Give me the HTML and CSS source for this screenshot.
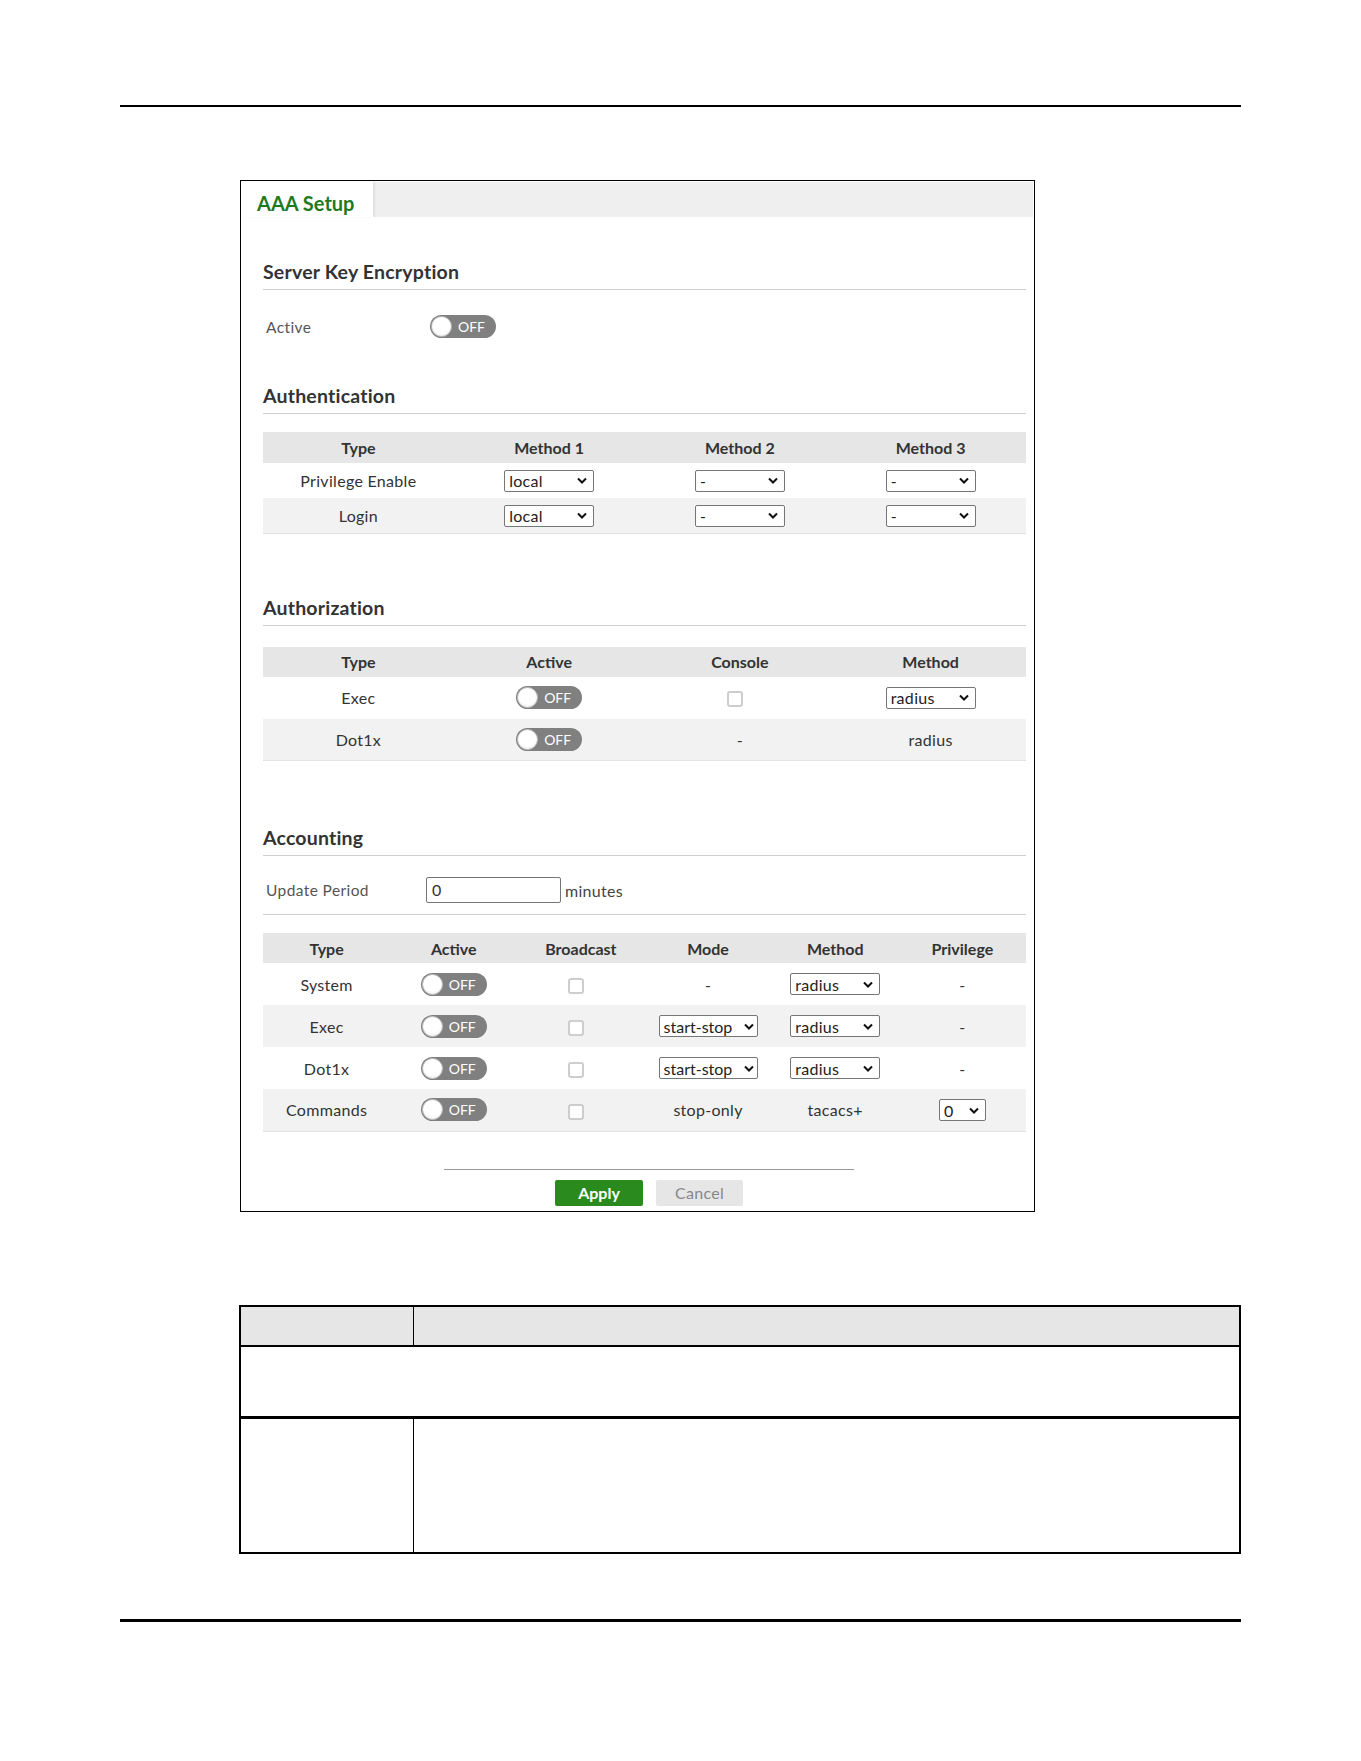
FILE: index.html
```html
<!DOCTYPE html>
<html lang="en">
<head>
  <meta charset="UTF-8">
  <title>AAA Setup</title>
  <link rel="stylesheet" href="styles.css">
</head>
<body>
  <div class="rule-top"></div>

  <div class="panel">
    <div class="tab-bar">
      <div class="tab">AAA Setup</div>
    </div>

    <div class="content">
      <h2 class="section-title first">Server Key Encryption</h2>
      <div class="field-row active-row">
        <span class="field-label">Active</span>
        <span class="toggle"><span class="knob"></span>OFF</span>
      </div>

      <h2 class="section-title auth-title">Authentication</h2>
      <table class="grid auth-grid">
        <thead>
          <tr><th>Type</th><th>Method 1</th><th>Method 2</th><th>Method 3</th></tr>
        </thead>
        <tbody>
          <tr>
            <td>Privilege Enable</td>
            <td><span class="select w90">local<svg viewBox="0 0 10 6"><path d="M1 1l4 4 4-4"/></svg></span></td>
            <td><span class="select w90">-<svg viewBox="0 0 10 6"><path d="M1 1l4 4 4-4"/></svg></span></td>
            <td><span class="select w90">-<svg viewBox="0 0 10 6"><path d="M1 1l4 4 4-4"/></svg></span></td>
          </tr>
          <tr>
            <td>Login</td>
            <td><span class="select w90">local<svg viewBox="0 0 10 6"><path d="M1 1l4 4 4-4"/></svg></span></td>
            <td><span class="select w90">-<svg viewBox="0 0 10 6"><path d="M1 1l4 4 4-4"/></svg></span></td>
            <td><span class="select w90">-<svg viewBox="0 0 10 6"><path d="M1 1l4 4 4-4"/></svg></span></td>
          </tr>
        </tbody>
      </table>

      <h2 class="section-title authz-title">Authorization</h2>
      <table class="grid tall-grid authz-grid">
        <thead>
          <tr><th>Type</th><th>Active</th><th>Console</th><th>Method</th></tr>
        </thead>
        <tbody>
          <tr>
            <td>Exec</td>
            <td><span class="toggle"><span class="knob"></span>OFF</span></td>
            <td><span class="check"></span></td>
            <td><span class="select w90">radius<svg viewBox="0 0 10 6"><path d="M1 1l4 4 4-4"/></svg></span></td>
          </tr>
          <tr>
            <td>Dot1x</td>
            <td><span class="toggle"><span class="knob"></span>OFF</span></td>
            <td>-</td>
            <td>radius</td>
          </tr>
        </tbody>
      </table>

      <h2 class="section-title acct-title">Accounting</h2>
      <div class="field-row period-row">
        <span class="field-label">Update Period</span>
        <span class="text-input">0</span>
        <span class="unit">minutes</span>
      </div>
      <div class="divider"></div>

      <table class="grid tall-grid acct-grid">
        <thead>
          <tr><th>Type</th><th>Active</th><th>Broadcast</th><th>Mode</th><th>Method</th><th>Privilege</th></tr>
        </thead>
        <tbody>
          <tr>
            <td>System</td>
            <td><span class="toggle"><span class="knob"></span>OFF</span></td>
            <td><span class="check"></span></td>
            <td>-</td>
            <td><span class="select w90">radius<svg viewBox="0 0 10 6"><path d="M1 1l4 4 4-4"/></svg></span></td>
            <td>-</td>
          </tr>
          <tr>
            <td>Exec</td>
            <td><span class="toggle"><span class="knob"></span>OFF</span></td>
            <td><span class="check"></span></td>
            <td><span class="select w99">start-stop<svg viewBox="0 0 10 6"><path d="M1 1l4 4 4-4"/></svg></span></td>
            <td><span class="select w90">radius<svg viewBox="0 0 10 6"><path d="M1 1l4 4 4-4"/></svg></span></td>
            <td>-</td>
          </tr>
          <tr>
            <td>Dot1x</td>
            <td><span class="toggle"><span class="knob"></span>OFF</span></td>
            <td><span class="check"></span></td>
            <td><span class="select w99">start-stop<svg viewBox="0 0 10 6"><path d="M1 1l4 4 4-4"/></svg></span></td>
            <td><span class="select w90">radius<svg viewBox="0 0 10 6"><path d="M1 1l4 4 4-4"/></svg></span></td>
            <td>-</td>
          </tr>
          <tr>
            <td>Commands</td>
            <td><span class="toggle"><span class="knob"></span>OFF</span></td>
            <td><span class="check"></span></td>
            <td>stop-only</td>
            <td>tacacs+</td>
            <td><span class="select w47">0<svg viewBox="0 0 10 6"><path d="M1 1l4 4 4-4"/></svg></span></td>
          </tr>
        </tbody>
      </table>

      <div class="footer">
        <button class="btn btn-apply">Apply</button>
        <button class="btn btn-cancel">Cancel</button>
      </div>
    </div>
  </div>

  <table class="doc-table">
    <tr class="doc-head"><td class="col-label"></td><td></td></tr>
    <tr class="doc-span"><td colspan="2"></td></tr>
    <tr class="doc-row"><td class="col-label"></td><td></td></tr>
  </table>

  <div class="rule-bottom"></div>
</body>
</html>
```

FILE: styles.css
```css
* {
  margin: 0;
  padding: 0;
  box-sizing: border-box;
}

body {
  background: #fff;
  font-family: Lato, 'DejaVu Sans', sans-serif;
  color: #333;
  width: 1361px;
}

.rule-top {
  margin: 105px 0 0 120px;
  width: 1121px;
  border-top: 2px solid #000;
}

.panel {
  margin: 73px 0 0 240px;
  width: 795px;
  border: 1px solid #000;
  padding: 1px;
}

.tab-bar {
  height: 35px;
  background: #efefef;
  display: flex;
}

.tab {
  width: 131px;
  background: #fff;
  color: #1f7a1f;
  font-weight: 700;
  font-size: 20px;
  line-height: 42px;
  padding-left: 15px;
  box-shadow: 2px 0 2px rgba(0, 0, 0, 0.06);
}

.content {
  padding: 0 7px 4px 21px;
}

.section-title {
  font-size: 19.5px;
  font-weight: 700;
  line-height: 24px;
  padding-bottom: 5px;
  border-bottom: 1px solid #cfcfcf;
  color: #333;
  letter-spacing: 0.2px;
}

.section-title.first { margin-top: 43px; }
.section-title.auth-title { margin-top: 46px; }
.section-title.authz-title { margin-top: 62px; }
.section-title.acct-title { margin-top: 65px; }

.field-row {
  display: flex;
  align-items: center;
}

.active-row {
  margin-top: 25px;
  height: 23px;
}

.period-row {
  margin-top: 21px;
  height: 26px;
}

.field-label {
  width: 163px;
  padding-left: 3px;
  font-size: 15.5px;
  letter-spacing: 0.4px;
  color: #555;
}

.active-row .field-label {
  width: 167px;
}

.text-input {
  width: 135px;
  height: 26px;
  border: 1px solid #767676;
  border-radius: 2px;
  font-size: 16px;
  line-height: 24px;
  padding-left: 5px;
  color: #333;
}

.unit {
  margin-left: 4px;
  font-size: 16px;
  letter-spacing: 0.3px;
  color: #444;
}

.divider {
  margin-top: 11px;
  border-top: 1px solid #cfcfcf;
}

.toggle {
  display: inline-flex;
  align-items: center;
  width: 66px;
  height: 23px;
  border-radius: 12px;
  background: #808080;
  color: #fff;
  font-size: 14px;
  padding-left: 1px;
  vertical-align: middle;
  letter-spacing: 0;
}

.knob {
  width: 21px;
  height: 21px;
  border-radius: 50%;
  background: radial-gradient(circle at 50% 40%, #fff 55%, #e4e4e4 100%);
  border: 1px solid #bdbdbd;
  margin-right: 6px;
}

.grid {
  width: 100%;
  border-collapse: collapse;
  table-layout: fixed;
  font-size: 16px;
  border-bottom: 1px solid #e2e2e2;
}

.auth-grid { margin-top: 18px; }
.authz-grid { margin-top: 21px; }
.acct-grid { margin-top: 18px; }

.grid th {
  background: #e6e6e6;
  height: 31px;
  font-weight: 700;
  color: #333;
  text-align: center;
}

.authz-grid th,
.acct-grid th {
  height: 30px;
}

.grid td {
  height: 35px;
  text-align: center;
  color: #333;
  letter-spacing: 0.3px;
}

.tall-grid td {
  height: 42px;
}

.grid tbody tr:nth-child(even) td {
  background: #f2f2f2;
}

.select {
  display: inline-flex;
  align-items: center;
  justify-content: space-between;
  height: 22px;
  border: 1px solid #767676;
  border-radius: 2px;
  background: #fff;
  padding: 0 6px 0 4px;
  font-size: 16px;
  color: #222;
  vertical-align: middle;
  text-align: left;
  letter-spacing: 0.3px;
}

.select svg {
  width: 10px;
  height: 7px;
  fill: none;
  stroke: #111;
  stroke-width: 2;
}

.w90 { width: 90px; }
.w99 { width: 99px; padding-right: 3px; letter-spacing: 0; }
.w47 { width: 47px; }

.check {
  display: inline-block;
  width: 16px;
  height: 16px;
  border: 2px solid #cdcdcd;
  border-radius: 3px;
  background: #fff;
  vertical-align: middle;
  margin-right: 10px;
}

.footer {
  margin: 37px 0 0 181px;
  width: 410px;
  border-top: 1px solid #9a9a9a;
  padding-top: 10px;
  display: flex;
  justify-content: center;
  gap: 13px;
}

.btn {
  height: 26px;
  border: none;
  border-radius: 2px;
  font-family: Lato, 'DejaVu Sans', sans-serif;
  font-size: 16px;
}

.btn-apply {
  width: 88px;
  background: #2b8a1e;
  color: #fff;
  font-weight: 700;
}

.btn-cancel {
  width: 87px;
  background: #e6e6e6;
  color: #888;
  letter-spacing: 0.3px;
}

.doc-table {
  margin: 93px 0 0 239px;
  width: 1002px;
  border-collapse: collapse;
  border: 2px solid #000;
}

.doc-table td {
  border-left: 1px solid #000;
}

.col-label {
  width: 173px;
}

.doc-head td {
  height: 40px;
  background: #e6e6e6;
  border-bottom: 2px solid #000;
}

.doc-span td {
  height: 72px;
  border-bottom: 3px solid #000;
}

.doc-row td {
  height: 135px;
}

.rule-bottom {
  margin: 65px 0 0 120px;
  width: 1121px;
  border-top: 3px solid #000;
}
```
